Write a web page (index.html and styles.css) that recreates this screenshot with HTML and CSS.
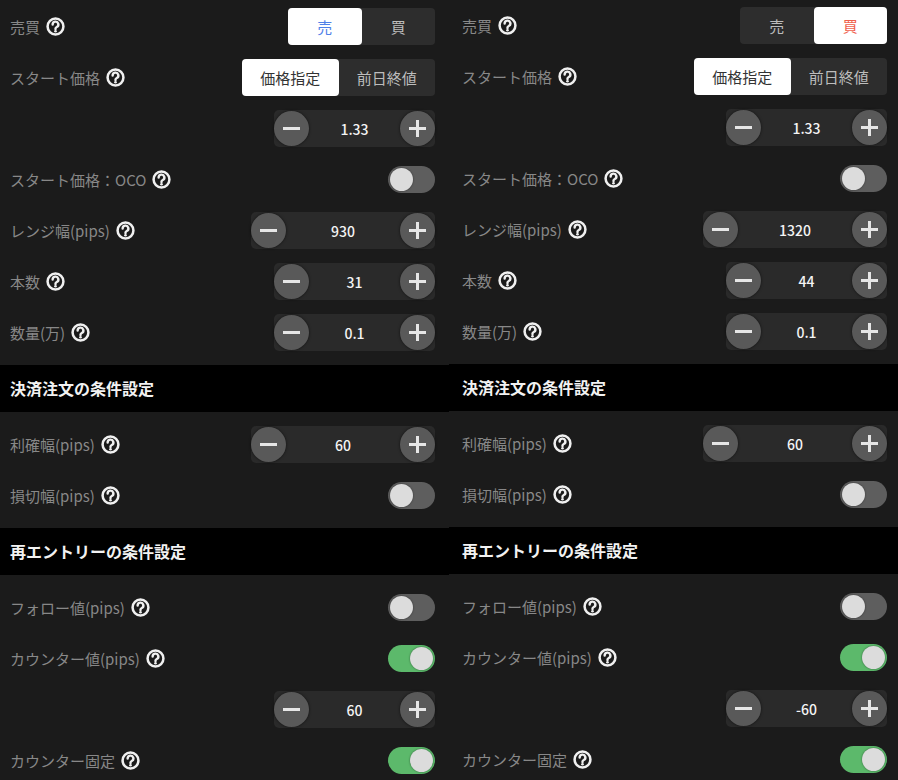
FILE: index.html
```html
<!DOCTYPE html>
<html lang="ja">
<head>
  <meta charset="UTF-8">
  <title>注文設定</title>
  <link rel="stylesheet" href="styles.css">
</head>
<body>
  <div class="compare">

    <!-- 売 -->
    <div class="panel">
      <div class="section section-first">
        <div class="row">
          <span class="label">売買 <i class="help"></i></span>
          <div class="seg seg-side">
            <span class="seg-item active sell">売</span>
            <span class="seg-item">買</span>
          </div>
        </div>
        <div class="row">
          <span class="label">スタート価格 <i class="help"></i></span>
          <div class="seg seg-price">
            <span class="seg-item active">価格指定</span>
            <span class="seg-item">前日終値</span>
          </div>
        </div>
        <div class="row row-end">
          <div class="stepper"><span class="step minus"></span><span class="value">1.33</span><span class="step plus"></span></div>
        </div>
        <div class="row">
          <span class="label">スタート価格：OCO <i class="help"></i></span>
          <span class="toggle"></span>
        </div>
        <div class="row">
          <span class="label">レンジ幅(pips) <i class="help"></i></span>
          <div class="stepper wide"><span class="step minus"></span><span class="value">930</span><span class="step plus"></span></div>
        </div>
        <div class="row">
          <span class="label">本数 <i class="help"></i></span>
          <div class="stepper"><span class="step minus"></span><span class="value">31</span><span class="step plus"></span></div>
        </div>
        <div class="row">
          <span class="label">数量(万) <i class="help"></i></span>
          <div class="stepper"><span class="step minus"></span><span class="value">0.1</span><span class="step plus"></span></div>
        </div>
      </div>

      <h2 class="section-title">決済注文の条件設定</h2>
      <div class="section">
        <div class="row">
          <span class="label">利確幅(pips) <i class="help"></i></span>
          <div class="stepper wide"><span class="step minus"></span><span class="value">60</span><span class="step plus"></span></div>
        </div>
        <div class="row">
          <span class="label">損切幅(pips) <i class="help"></i></span>
          <span class="toggle"></span>
        </div>
      </div>

      <h2 class="section-title">再エントリーの条件設定</h2>
      <div class="section">
        <div class="row">
          <span class="label">フォロー値(pips) <i class="help"></i></span>
          <span class="toggle"></span>
        </div>
        <div class="row">
          <span class="label">カウンター値(pips) <i class="help"></i></span>
          <span class="toggle on"></span>
        </div>
        <div class="row row-end">
          <div class="stepper"><span class="step minus"></span><span class="value">60</span><span class="step plus"></span></div>
        </div>
        <div class="row">
          <span class="label">カウンター固定 <i class="help"></i></span>
          <span class="toggle on"></span>
        </div>
      </div>
    </div>

    <!-- 買 -->
    <div class="panel panel-buy">
      <div class="section section-first">
        <div class="row">
          <span class="label">売買 <i class="help"></i></span>
          <div class="seg seg-side">
            <span class="seg-item">売</span>
            <span class="seg-item active buy">買</span>
          </div>
        </div>
        <div class="row">
          <span class="label">スタート価格 <i class="help"></i></span>
          <div class="seg seg-price">
            <span class="seg-item active">価格指定</span>
            <span class="seg-item">前日終値</span>
          </div>
        </div>
        <div class="row row-end">
          <div class="stepper"><span class="step minus"></span><span class="value">1.33</span><span class="step plus"></span></div>
        </div>
        <div class="row">
          <span class="label">スタート価格：OCO <i class="help"></i></span>
          <span class="toggle"></span>
        </div>
        <div class="row">
          <span class="label">レンジ幅(pips) <i class="help"></i></span>
          <div class="stepper wide"><span class="step minus"></span><span class="value">1320</span><span class="step plus"></span></div>
        </div>
        <div class="row">
          <span class="label">本数 <i class="help"></i></span>
          <div class="stepper"><span class="step minus"></span><span class="value">44</span><span class="step plus"></span></div>
        </div>
        <div class="row">
          <span class="label">数量(万) <i class="help"></i></span>
          <div class="stepper"><span class="step minus"></span><span class="value">0.1</span><span class="step plus"></span></div>
        </div>
      </div>

      <h2 class="section-title">決済注文の条件設定</h2>
      <div class="section">
        <div class="row">
          <span class="label">利確幅(pips) <i class="help"></i></span>
          <div class="stepper wide"><span class="step minus"></span><span class="value">60</span><span class="step plus"></span></div>
        </div>
        <div class="row">
          <span class="label">損切幅(pips) <i class="help"></i></span>
          <span class="toggle"></span>
        </div>
      </div>

      <h2 class="section-title">再エントリーの条件設定</h2>
      <div class="section">
        <div class="row">
          <span class="label">フォロー値(pips) <i class="help"></i></span>
          <span class="toggle"></span>
        </div>
        <div class="row">
          <span class="label">カウンター値(pips) <i class="help"></i></span>
          <span class="toggle on"></span>
        </div>
        <div class="row row-end">
          <div class="stepper"><span class="step minus"></span><span class="value">-60</span><span class="step plus"></span></div>
        </div>
        <div class="row">
          <span class="label">カウンター固定 <i class="help"></i></span>
          <span class="toggle on"></span>
        </div>
      </div>
    </div>

  </div>
</body>
</html>
```

FILE: styles.css
```css
body {
  margin: 0;
  background: #1b1b1b;
  color: #888;
  font-family: "Noto Sans CJK JP", "Noto Sans", sans-serif;
  font-size: 15px;
  overflow: hidden;
}
.compare {
  display: grid;
  grid-template-columns: 449px 449px;
}
.panel {
  background: #1b1b1b;
}
.panel-buy {
  margin-top: -1px;
}
.section {
  padding: 7px 0;
}
.section-first {
  padding-top: 1px;
}
.section-title {
  margin: 0;
  height: 47px;
  line-height: 47px;
  padding-left: 10px;
  background: #000;
  color: #f2f2f2;
  font-size: 16px;
  font-weight: bold;
}
.row {
  height: 51px;
  padding: 0 14px 0 10px;
  display: flex;
  align-items: center;
  justify-content: space-between;
}
.panel-buy .row {
  padding: 0 11px 0 13px;
}
.panel-buy .section-title {
  padding-left: 13px;
}
.row-end {
  justify-content: flex-end;
}
.label {
  display: flex;
  align-items: center;
  gap: 6px;
  white-space: nowrap;
}

/* question mark icon */
.help {
  width: 19px;
  height: 19px;
  display: inline-block;
  background: url("data:image/svg+xml;utf8,<svg xmlns='http://www.w3.org/2000/svg' viewBox='0 0 18 18'><circle cx='9' cy='9' r='7.5' fill='none' stroke='%23f0f0f0' stroke-width='2.4'/><path d='M6.3 7.1a2.7 2.7 0 1 1 3.9 2.4c-.8.4-1.2.9-1.2 1.6v.3' fill='none' stroke='%23f0f0f0' stroke-width='2.3' stroke-linecap='round'/><circle cx='9' cy='13.5' r='1.3' fill='%23f0f0f0'/></svg>") no-repeat center / 19px 19px;
}

/* segmented control */
.seg {
  display: flex;
  height: 37px;
  background: #2d2d2d;
  border-radius: 4px;
}
.seg-side {
  width: 147px;
}
.seg-price {
  width: 193px;
}
.seg-item {
  flex: 1;
  display: flex;
  align-items: center;
  justify-content: center;
  color: #bdbdbd;
  border-radius: 4px;
}
.seg-item.active {
  background: #fff;
  color: #333;
}
.seg-item.sell {
  color: #4f80e8;
}
.seg-item.buy {
  color: #f0604c;
}

/* number stepper */
.stepper {
  width: 161px;
  height: 37px;
  background: #2a2a2a;
  border-radius: 5px;
  display: flex;
  align-items: center;
  justify-content: space-between;
}
.stepper.wide {
  width: 184px;
}
.value {
  color: #f4f4f4;
  font-size: 14px;
  font-weight: 500;
}
.step {
  position: relative;
  width: 35px;
  height: 35px;
  border-radius: 50%;
  background: #595959;
  box-shadow: 0 0 3px rgba(0, 0, 0, 0.6);
}
.step::before,
.step::after {
  content: "";
  position: absolute;
  left: 9px;
  top: 16px;
  width: 17px;
  height: 3px;
  background: #e6e6e6;
}
.minus::after {
  display: none;
}
.plus::after {
  transform: rotate(90deg);
}

/* switch */
.toggle {
  position: relative;
  width: 47px;
  height: 27px;
  border-radius: 14px;
  background: #5e5e5e;
}
.toggle::after {
  content: "";
  position: absolute;
  top: 2px;
  left: 2px;
  width: 23px;
  height: 23px;
  border-radius: 50%;
  background: #dcdcdc;
  box-shadow: 0 0 2px rgba(0, 0, 0, 0.5);
}
.toggle.on {
  background: #5cb96b;
}
.toggle.on::after {
  left: 22px;
}
```
